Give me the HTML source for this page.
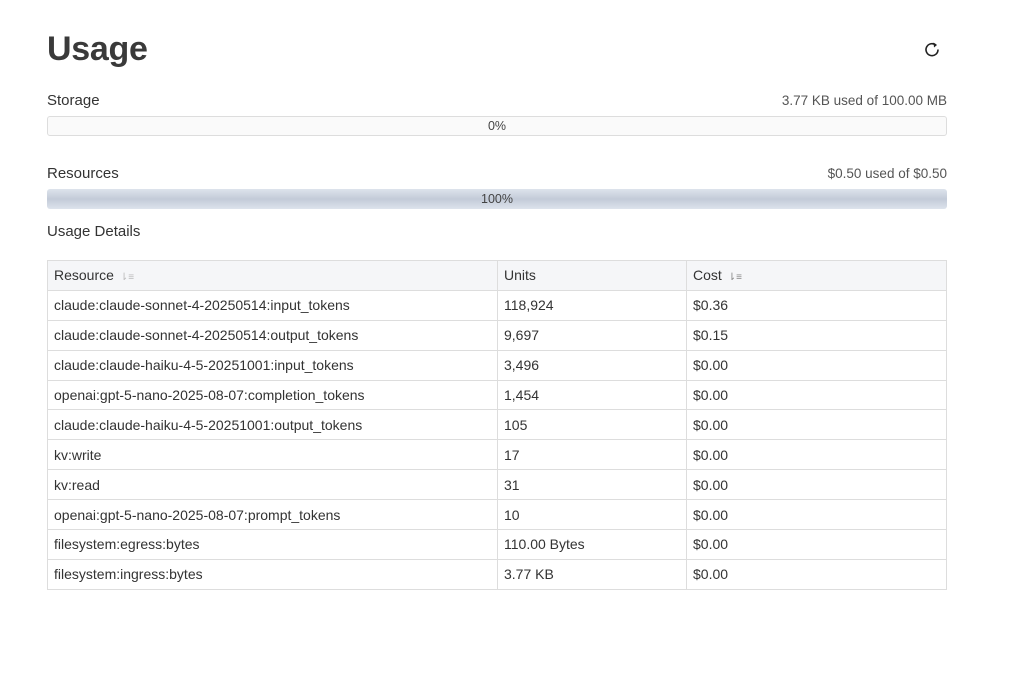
<!DOCTYPE html>
<html><head><style>
*{box-sizing:border-box;margin:0;padding:0}
body{width:1014px;height:696px;background:#fff;font-family:"Liberation Sans",sans-serif;color:#333;position:relative;overflow:hidden}
.abs{position:absolute}
h1{position:absolute;left:47px;top:30px;font-size:34px;font-weight:bold;color:#3a3a3a;letter-spacing:-0.3px}
.lbl{font-size:15px;color:#333}
.r{font-size:13.5px;color:#555;text-align:right}
.bar{position:absolute;left:47px;width:900px;border-radius:3px;font-size:12.5px;text-align:center;color:#444}
table{position:absolute;left:47px;top:260px;width:900px;border-collapse:collapse;font-size:14px;color:#333}
td,th{border:1px solid #ddd;height:29.9px;padding:0 6px;text-align:left;font-weight:normal}
th{background:#f5f6f8}
.ic{color:#bbb;font-size:10px;margin-left:6px}
</style></head><body>
<h1>Usage</h1>
<svg class="abs" style="left:923px;top:40px" width="18" height="18" viewBox="0 0 18 18"><path d="M13 5.2A6 6 0 1 0 15 9.5" fill="none" stroke="#222" stroke-width="1.6"/><path d="M10.5 2.5L14 5L11 7.5Z" fill="#222"/></svg>
<div class="abs lbl" style="left:47px;top:92px">Storage</div>
<div class="abs r" style="right:67px;top:93px">3.77 KB used of 100.00 MB</div>
<div class="bar" style="top:116px;height:20px;border:1px solid #ddd;background:#fafafa;line-height:18px">0%</div>
<div class="abs lbl" style="left:47px;top:165px">Resources</div>
<div class="abs r" style="right:67px;top:166px">$0.50 used of $0.50</div>
<div class="bar" style="top:189px;height:20px;background:linear-gradient(#dde3ec,#c3cbd8 50%,#dde3ec);line-height:20px">100%</div>
<div class="abs lbl" style="left:47px;top:223px">Usage Details</div>
<table>
<tr><th style="width:450px">Resource<span class="ic">⇂≡</span></th><th style="width:189px">Units</th><th>Cost<span class="ic" style="color:#888">⇂≡</span></th></tr>
<tr><td>claude:claude-sonnet-4-20250514:input_tokens</td><td>118,924</td><td>$0.36</td></tr>
<tr><td>claude:claude-sonnet-4-20250514:output_tokens</td><td>9,697</td><td>$0.15</td></tr>
<tr><td>claude:claude-haiku-4-5-20251001:input_tokens</td><td>3,496</td><td>$0.00</td></tr>
<tr><td>openai:gpt-5-nano-2025-08-07:completion_tokens</td><td>1,454</td><td>$0.00</td></tr>
<tr><td>claude:claude-haiku-4-5-20251001:output_tokens</td><td>105</td><td>$0.00</td></tr>
<tr><td>kv:write</td><td>17</td><td>$0.00</td></tr>
<tr><td>kv:read</td><td>31</td><td>$0.00</td></tr>
<tr><td>openai:gpt-5-nano-2025-08-07:prompt_tokens</td><td>10</td><td>$0.00</td></tr>
<tr><td>filesystem:egress:bytes</td><td>110.00 Bytes</td><td>$0.00</td></tr>
<tr><td>filesystem:ingress:bytes</td><td>3.77 KB</td><td>$0.00</td></tr>
</table>
</body></html>
